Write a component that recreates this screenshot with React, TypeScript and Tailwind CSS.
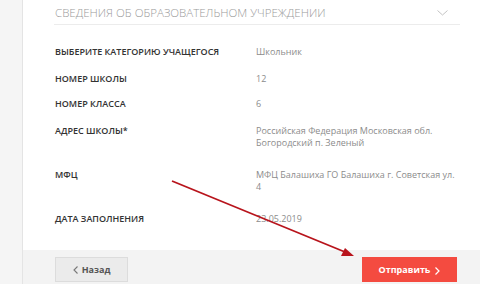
import React from "react"

const rows = [
  { label: "Выберите категорию учащегося", value: ["Школьник"], h: "h-[27px]" },
  { label: "Номер школы", value: ["12"], h: "h-[25px]" },
  { label: "Номер класса", value: ["6"], h: "h-[27px]" },
  {
    label: "Адрес школы*",
    value: ["Российская Федерация Московская обл.", "Богородский п. Зеленый"],
    h: "h-[44px]",
  },
  { label: "МФЦ", value: ["МФЦ Балашиха ГО Балашиха г. Советская ул.", "4"], h: "h-[44px]" },
  { label: "Дата заполнения", value: ["23.05.2019"], h: "h-[30px]" },
]

export default function App() {
  return (
    <div
      className="relative flex h-[284px] w-[480px] overflow-hidden bg-[#f3f3f3]"
      style={{ fontFamily: "'Open Sans', 'Noto Sans', sans-serif" }}
    >
      {/* left strip */}
      <div className="w-[23px] shrink-0 border-r border-[#e4e4e4] bg-[#f5f5f5]" />

      <div className="flex flex-1 flex-col">
        {/* white panel */}
        <div className="h-[250px] bg-white pl-[31px] pr-[20px]">
          <div className="flex h-[25px] items-center justify-between border-b border-[#ececec] pl-[1px] pr-[12px]">
            <span className="mt-[2px] text-[11.5px] font-light uppercase leading-none text-[#9a9a9a]">
              Сведения об образовательном учреждении
            </span>
            <svg width="11" height="6" viewBox="0 0 11 6" className="mt-[1px]">
              <path d="M0.5 0.5 L5.5 5 L10.5 0.5" fill="none" stroke="#c4c4c4" strokeWidth="1" />
            </svg>
          </div>

          <div className="pt-[21px] pl-[1px]">
            {rows.map((r) => (
              <div key={r.label} className={`flex ${r.h}`}>
                <div className="w-[201px] shrink-0 text-[9px] font-semibold uppercase leading-[12px] text-[#333]">
                  {r.label}
                </div>
                <div className="text-[9px] leading-[12px] text-[#8c8c8c]">
                  {r.value.map((v) => (
                    <div key={v}>{v}</div>
                  ))}
                </div>
              </div>
            ))}
          </div>
        </div>

        {/* footer */}
        <div className="flex flex-1 items-start justify-between pl-[32px] pr-[23px] pt-[7px]">
          <button className="flex h-[25px] w-[73px] items-center justify-center gap-[4px] border border-[#dcdcdc] bg-[#ebebeb] text-[9px] font-bold text-[#555]">
            <svg width="5" height="8" viewBox="0 0 5 8">
              <path d="M4.5 0.5 L1 4 L4.5 7.5" fill="none" stroke="#777" strokeWidth="1.1" />
            </svg>
            Назад
          </button>
          <button className="flex h-[25px] w-[95px] items-center justify-center gap-[5px] bg-[#f44b40] text-[9px] font-bold text-white">
            Отправить
            <svg width="5" height="8" viewBox="0 0 5 8" className="mt-[2px]">
              <path d="M0.5 0.5 L4 4 L0.5 7.5" fill="none" stroke="#fff" strokeWidth="1.2" />
            </svg>
          </button>
        </div>
      </div>

      {/* annotation arrow */}
      <svg className="pointer-events-none absolute inset-0" width="480" height="284">
        <line x1="172" y1="181" x2="345" y2="252" stroke="#b8141c" strokeWidth="1.8" />
        <polygon points="354,256 341,256 345,248" fill="#b8141c" />
      </svg>
    </div>
  )
}
